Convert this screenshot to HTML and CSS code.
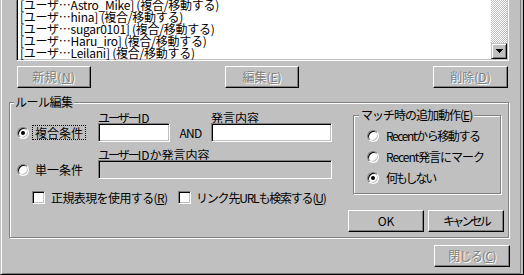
FILE: index.html
```html
<!DOCTYPE html>
<html lang="ja">
<head>
<meta charset="utf-8">
<title>ルール設定</title>
<link rel="stylesheet" href="styles.css">
</head>
<body>
<div class="window">
  <div class="listbox">
    <ul class="rows">
      <li>[ユーザ…Astro_Mike] (複合/移動する)</li>
      <li>[ユーザ…hina] (複合/移動する)</li>
      <li>[ユーザ…sugar0101] (複合/移動する)</li>
      <li>[ユーザ…Haru_iro] (複合/移動する)</li>
      <li>[ユーザ…Leilani] (複合/移動する)</li>
    </ul>
    <div class="vscroll">
      <div class="track"></div>
      <div class="sbtn">
        <svg class="arrow" width="7" height="4" viewBox="0 0 7 4" shape-rendering="crispEdges"><path d="M0 0h7v1H0zM1 1h5v1H1zM2 2h3v1H2zM3 3h1v1H3z" fill="#000"/></svg>
      </div>
    </div>
  </div>

  <div class="btnrow">
    <div class="btn disabled b-new">新規(<u>N</u>)</div>
    <div class="btn disabled b-edit">編集(<u>E</u>)</div>
    <div class="btn disabled b-del">削除(<u>D</u>)</div>
  </div>

  <div class="group rule">
    <span class="legend">ルール編集</span>
    <div class="rule-left">
      <div class="crow row1">
        <div class="opt"><span class="radio on"></span><span class="optlabel focus">複合条件</span></div>
        <div class="field f1"><span class="flabel"><span class="kana">ユーザー</span>ID</span><span class="input"></span></div>
        <span class="and">AND</span>
        <div class="field f2"><span class="flabel">発言内容</span><span class="input"></span></div>
      </div>
      <div class="crow row2">
        <div class="opt"><span class="radio"></span><span class="optlabel">単一条件</span></div>
        <div class="field f3"><span class="flabel"><span class="kana">ユーザー</span>IDか発言内容</span><span class="input off"></span></div>
      </div>
      <div class="checks">
        <span class="check"></span><span class="clabel c1">正規表現を使用する(<u>R</u>)</span>
        <span class="check"></span><span class="clabel c2">リンク先URLも検索する(<u>U</u>)</span>
      </div>
    </div>
    <div class="rule-right">
      <div class="group match">
        <span class="legend">マッチ時の追加動作(<u>E</u>)</span>
        <div class="mrow"><span class="radio"></span><span class="mlabel m1">Recentから移動する</span></div>
        <div class="mrow"><span class="radio"></span><span class="mlabel m2">Recent発言にマーク</span></div>
        <div class="mrow"><span class="radio on"></span><span class="mlabel m3">何もしない</span></div>
      </div>
      <div class="okrow">
        <div class="btn b-ok">OK</div>
        <div class="btn b-cancel">キャンセル</div>
      </div>
    </div>
  </div>

  <div class="closerow">
    <div class="btn disabled b-close">閉じる(<u>C</u>)</div>
  </div>
</div>
</body>
</html>
```
FILE: styles.css
```css
* {
  box-sizing: border-box;
  margin: 0;
  padding: 0;
}

html, body {
  width: 524px;
  height: 275px;
  overflow: hidden;
  background: #c0c0c0;
}

body {
  font-family: "Noto Sans CJK JP", "Liberation Sans", sans-serif;
  font-size: 12px;
  line-height: 12px;
  color: #000;
}

u {
  text-decoration: underline;
  text-underline-offset: 1px;
}

.window {
  width: 524px;
  height: 275px;
  border-left: 1px solid #c0c0c0;
  border-right: 1px solid #000;
  border-bottom: 1px solid #000;
  box-shadow: inset 1px 0 0 #fff, inset -2px 0 0 #c0c0c0, inset -3px 0 0 #808080, inset 0 -1px 0 #808080;
}

/* list box */
.listbox {
  margin-left: 15px;
  width: 493px;
  height: 61px;
  background: #fff;
  border: 1px solid;
  border-top: 0;
  border-color: #808080 #fff #fff #808080;
  box-shadow: inset 1px 0 0 #000, inset -1px -1px 0 #c0c0c0;
  display: flex;
  overflow: hidden;
}

.rows {
  list-style: none;
  flex: 1;
  padding-left: 3px;
  margin-top: -1px;
}

.rows li {
  height: 12px;
  line-height: 12px;
  white-space: nowrap;
  letter-spacing: -0.25px;
}

.vscroll {
  width: 16px;
  margin-right: 1px;
  margin-bottom: 1px;
  display: flex;
  flex-direction: column;
}

.track {
  flex: 1;
  background: repeating-conic-gradient(#fff 0 25%, #c0c0c0 0 50%) 0 0 / 2px 2px;
}

.sbtn {
  height: 16px;
  background: #c0c0c0;
  border: 1px solid;
  border-color: #c0c0c0 #000 #000 #c0c0c0;
  box-shadow: inset 1px 1px 0 #fff, inset -1px -1px 0 #808080;
  display: flex;
  align-items: center;
  justify-content: center;
}

.arrow {
  display: block;
}

/* buttons */
.btnrow {
  display: flex;
  margin-top: 5px;
}

.btn {
  height: 22px;
  border: 1px solid;
  border-color: #fff #000 #000 #fff;
  box-shadow: inset -1px -1px 0 #808080;
  display: flex;
  align-items: center;
  justify-content: center;
  white-space: nowrap;
}

.btn.disabled {
  color: #808080;
  text-shadow: 1px 1px 0 #fff;
}

.b-new { margin-left: 16px; width: 74px; letter-spacing: 0.5px; }
.b-edit { margin-left: 134px; width: 74px; }
.b-del { margin-left: 134px; width: 75px; }

/* group boxes */
.group {
  position: relative;
  border: 1px solid #808080;
  box-shadow: inset 1px 1px 0 #fff, 1px 1px 0 #fff;
}

.legend {
  position: absolute;
  top: -7px;
  height: 12px;
  line-height: 12px;
  background: #c0c0c0;
  white-space: nowrap;
}

.rule {
  margin: 14px 0 0 8px;
  width: 500px;
  height: 136px;
  display: flex;
}

.rule > .legend {
  left: 4px;
  padding: 0 1px;
  letter-spacing: -0.5px;
}

.rule-left {
  width: 338px;
  padding-top: 9px;
}

.crow {
  display: flex;
  align-items: flex-end;
}

.row2 {
  margin-top: 7px;
}

.opt {
  width: 88px;
  height: 19px;
  padding-left: 7px;
  display: flex;
  align-items: center;
}

.radio {
  position: relative;
  flex: none;
  width: 12px;
  height: 12px;
  border-radius: 50%;
  background: #fff;
  border: 1px solid;
  border-color: #808080 #fff #fff #808080;
  box-shadow: inset 1px 1px 0 #000, inset -1px -1px 0 #c0c0c0;
}

.radio.on::after {
  content: "";
  position: absolute;
  left: 3px;
  top: 3px;
  width: 4px;
  height: 4px;
  border-radius: 50%;
  background: #000;
}

.optlabel {
  margin-left: 3px;
  height: 15px;
  line-height: 13px;
  padding: 0 2px;
  border: 1px solid transparent;
  white-space: nowrap;
}

.optlabel.focus {
  border: 1px dotted #000;
}

.field {
  display: flex;
  flex-direction: column;
}

.flabel {
  height: 11px;
  line-height: 11px;
  white-space: nowrap;
}

.kana {
  letter-spacing: -2px;
}

.input {
  display: block;
  height: 19px;
  background: #fff;
  border: 1px solid;
  border-color: #808080 #fff #fff #808080;
  box-shadow: inset 1px 1px 0 #000, inset -1px -1px 0 #c0c0c0;
}

.input.off {
  background: #c0c0c0;
}

.f1 { width: 72px; }
.f2 { width: 121px; }
.f3 { width: 234px; }

.and {
  width: 41px;
  height: 19px;
  line-height: 19px;
  text-align: center;
  letter-spacing: -0.7px;
}

.checks {
  display: flex;
  align-items: center;
  height: 13px;
  margin-top: 12px;
  padding-left: 22px;
}

.check {
  flex: none;
  width: 13px;
  height: 13px;
  background: #fff;
  border: 1px solid;
  border-color: #808080 #fff #fff #808080;
  box-shadow: inset 1px 1px 0 #000, inset -1px -1px 0 #c0c0c0;
}

.clabel {
  white-space: nowrap;
}

.c1 { margin-left: 6px; width: 127px; letter-spacing: -0.6px; }
.c2 { margin-left: 5px; letter-spacing: -1.2px; }

.rule-right {
  width: 156px;
  padding-top: 12px;
}

.match {
  margin-left: 5px;
  width: 148px;
  height: 79px;
  padding: 9px 0 0 13px;
}

.match > .legend {
  left: 5px;
  padding: 0 2px;
  letter-spacing: -1px;
}

.mrow {
  height: 21px;
  display: flex;
  align-items: center;
}

.mlabel {
  margin-left: 7px;
  white-space: nowrap;
}

.m1 { letter-spacing: -1.4px; }
.m2 { letter-spacing: -1.05px; }
.m3 { letter-spacing: -2.2px; }

.okrow {
  display: flex;
  margin-top: 16px;
}

.b-ok { width: 76px; }
.b-cancel { width: 76px; margin-left: 4px; letter-spacing: -2.8px; }

.closerow {
  display: flex;
  margin-top: 7px;
}

.b-close {
  margin-left: 433px;
  width: 76px;
  letter-spacing: -0.7px;
}
```
